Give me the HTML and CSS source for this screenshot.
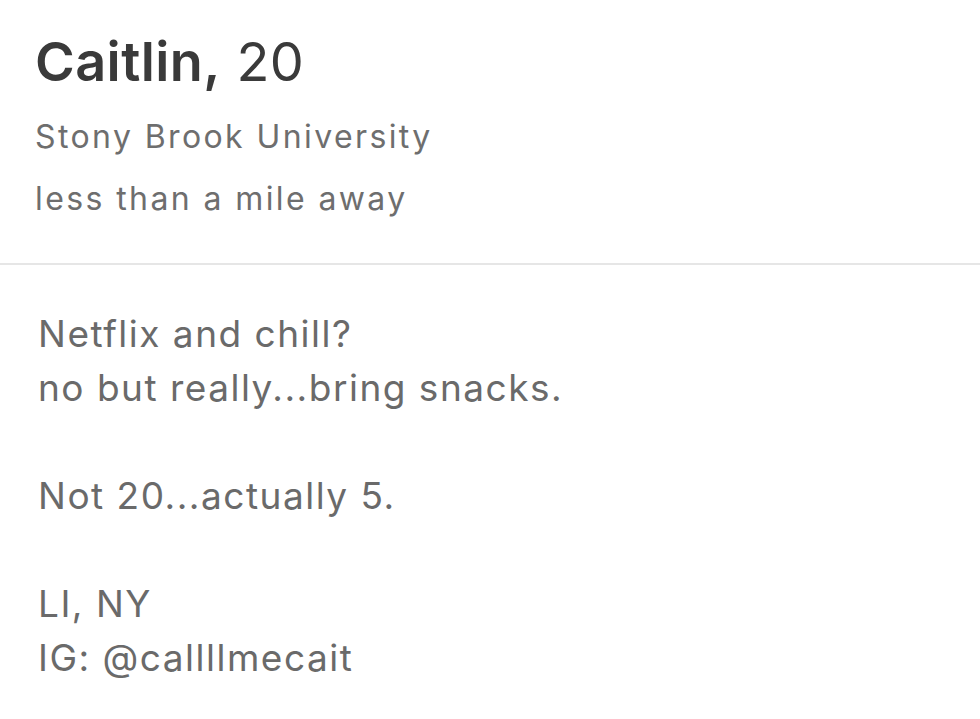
FILE: index.html
```html
<!DOCTYPE html>
<html lang="en">
<head>
<meta charset="utf-8">
<title>Caitlin, 20</title>
<link rel="stylesheet" href="styles.css">
</head>
<body>
<main class="profile">
  <section class="header">
    <h1 class="name"><span class="first">Caitlin,</span> <span class="age">20</span></h1>
    <p class="meta">Stony Brook University</p>
    <p class="meta">less than a mile away</p>
  </section>
  <hr class="divider">
  <section class="bio">
    <p class="para">Netflix and chill?<br>no but really...bring snacks.</p>
    <p class="para">Not 20...actually 5.</p>
    <p class="para">LI, NY<br>IG: @callllmecait</p>
  </section>
</main>
</body>
</html>
```

FILE: styles.css
```css
html, body {
  margin: 0;
  padding: 0;
  background: #ffffff;
}

body {
  font-family: "Inter", "Lato", "Liberation Sans", sans-serif;
  width: 980px;
  height: 719px;
  overflow: hidden;
}

.profile {
  display: flex;
  flex-direction: column;
}

.header {
  padding: 32px 0 33px 35px;
}

.name {
  margin: 0 0 14px 0;
  font-size: 54px;
  line-height: 60px;
  color: #3a3a3a;
  font-weight: 400;
  letter-spacing: 0.4px;
}

.name .first {
  font-weight: 600;
}

.meta {
  margin: 0;
  font-size: 32px;
  line-height: 62px;
  color: #6e6e6e;
  letter-spacing: 2.4px;
}

.divider {
  margin: 0;
  border: 0;
  height: 2px;
  background: #e6e6e6;
}

.bio {
  padding: 42px 0 0 38px;
}

.para {
  margin: 0 0 54px 0;
  font-size: 37px;
  line-height: 54px;
  color: #6a6a6a;
  letter-spacing: 1.5px;
}
```
